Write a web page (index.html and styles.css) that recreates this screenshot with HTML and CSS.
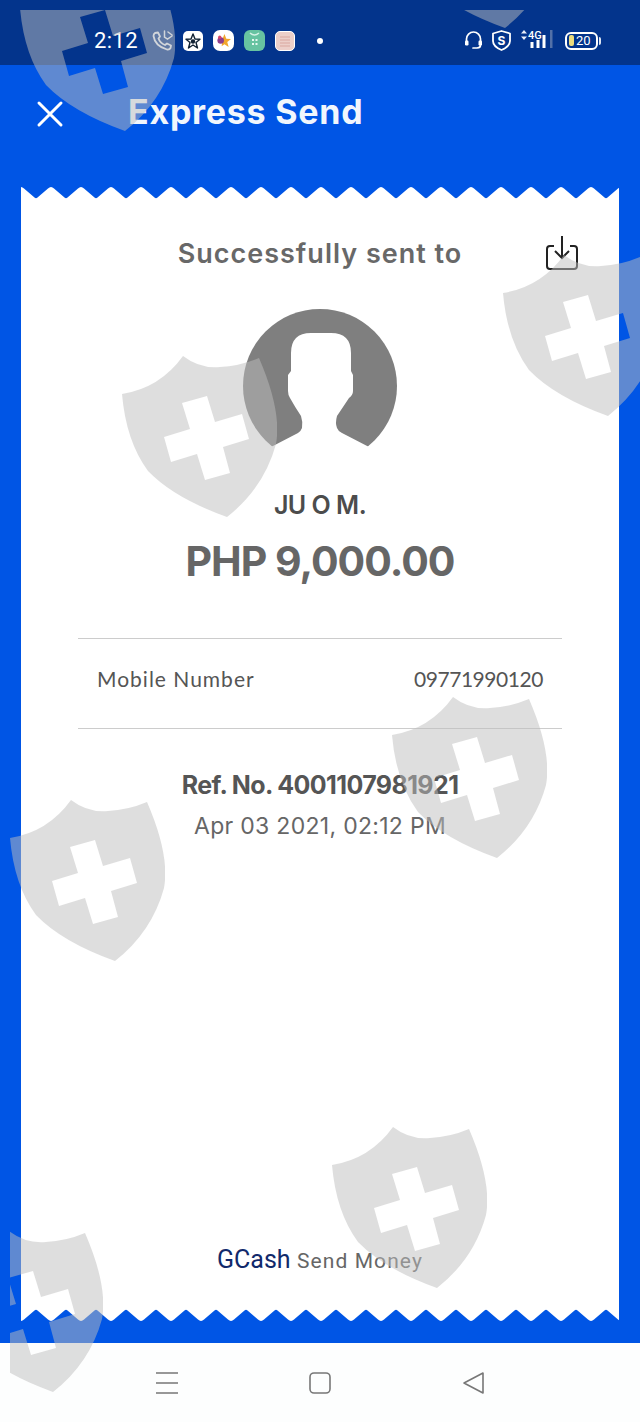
FILE: index.html
```html
<!DOCTYPE html>
<html lang="en">
<head>
    <meta charset="UTF-8">
    <meta name="viewport" content="width=device-width, initial-scale=1.0">
    <title>Express Send</title>
    <link rel="stylesheet" href="styles.css">
</head>
<body>
    <svg class="defs" width="0" height="0">
        <defs>
            <pattern id="teeth" width="30" height="13" patternUnits="userSpaceOnUse">
                <path d="M0 1 Q1.500 1 3 2.500 L13.500 11.500 Q15 12.800 16.500 11.500 L27 2.500 Q28.500 1 30 1 V13 H0 Z" fill="#fff"/>
            </pattern>
            <symbol id="shield" viewBox="0 0 155 162">
                <path fill-rule="evenodd" d="M61 0 Q78 13 98 11 Q118 10 137 2 Q160 55 154 88 Q142 132 105 161 Q52 142 26 115 Q4 85 0 38 Q38 32 61 0 Z M60 47 L85 40 L93 66 L120 58 L127 83 L101 91 L108 117 L83 124 L75 98 L49 106 L42 81 L68 73 Z"/>
            </symbol>
        </defs>
    </svg>

    <div class="status-bar">
        <span class="time">2:12</span>
        <svg class="phone" width="21" height="21" viewBox="0 0 21 21">
            <path d="M3 3 L6 2.500 L8 6.500 L6.500 8.500 Q8 13 13 15 L15 13.500 L19 15.500 L18.500 18 Q17.500 20 15 19.500 Q3 16 1.500 6 Q1.500 4 3 3 Z" fill="none" stroke="#e4ecf6" stroke-width="1.800" stroke-linejoin="round"/>
            <path d="M12.500 1 V7 L15.500 9 L20 6 M16 2 L20 5" fill="none" stroke="#e4ecf6" stroke-width="1.500" stroke-linecap="round"/>
        </svg>
        <span class="tile tile-star">
            <svg width="16" height="16" viewBox="0 0 16 16"><path d="M8 1 L10 6 L15 6.300 L11 9.500 L12.500 15 L8 12 L3.500 15 L5 9.500 L1 6.300 L6 6 Z" fill="#fff" stroke="#123" stroke-width="1.400" stroke-linejoin="round"/><circle cx="8" cy="8.500" r="2.200" fill="#123"/></svg>
        </span>
        <span class="tile tile-color">
            <svg width="15" height="15" viewBox="0 0 16 16"><path d="M9 1 L11 6 L16 6.300 L12 9.500 L13.500 15 L9 12 L6 14 L7 6 Z" fill="#f2a62c"/><circle cx="5" cy="8" r="3.500" fill="#8e3f8c"/><circle cx="4" cy="4.500" r="1.800" fill="#d8446a"/></svg>
        </span>
        <span class="tile tile-teal">
            <svg width="15" height="17" viewBox="0 0 15 17"><path d="M3 1 Q7.500 5 12 1" fill="none" stroke="#d5f2e6" stroke-width="1.400"/><path d="M5 7 H7 V9 H5 Z M8.500 7 H10.500 V9 H8.500 Z M5 11 H7 V13 H5 Z M8.500 11 H10.500 V13 H8.500 Z" fill="#e6f8f0"/></svg>
        </span>
        <span class="tile tile-note">
            <svg width="14" height="14" viewBox="0 0 14 14"><path d="M2 3 H12 M2 6 H12 M2 9 H12 M2 12 H12" stroke="#d9a79f" stroke-width="1"/></svg>
        </span>
        <span class="dot"></span>

        <span class="status-right">
            <svg width="19" height="19" viewBox="0 0 19 19">
                <path d="M2.500 11 V8 A7 7 0 0 1 16.500 8 V11 M16.500 14 Q16.500 17 13 17 H9" fill="none" stroke="#fff" stroke-width="1.700" stroke-linecap="round"/>
                <rect x="1" y="9.500" width="3.500" height="5" rx="1.200" fill="#fff"/>
                <rect x="14.500" y="9.500" width="3.500" height="5" rx="1.200" fill="#fff"/>
            </svg>
            <svg class="s-shield" width="19" height="21" viewBox="0 0 19 21">
                <path d="M9.500 1 L18 3.500 V11 Q18 16.500 9.500 20 Q1 16.500 1 11 V3.500 Z" fill="none" stroke="#fff" stroke-width="1.800" stroke-linejoin="round"/>
                <text x="9.500" y="14.500" class="s-letter">S</text>
            </svg>
            <span class="signal">
                <svg width="36" height="20" viewBox="0 0 36 20">
                    <path d="M4 1 L7 4.500 H1 Z M4 11 L1 7.500 H7 Z" fill="#e8eef8"/>
                    <text x="8" y="10" class="net">4G</text>
                    <rect x="10.500" y="13" width="3" height="6" fill="#fff"/>
                    <rect x="16.500" y="11" width="3" height="8" fill="#fff"/>
                    <rect x="22.500" y="6" width="3" height="13" fill="#fff"/>
                    <rect x="30" y="1" width="2.500" height="18" fill="#5270a8"/>
                </svg>
            </span>
            <span class="battery"><i class="charge"></i>20</span>
        </span>
    </div>

    <div class="main">
        <div class="header">
            <svg class="close" width="28" height="28" viewBox="0 0 28 28">
                <path d="M3 3 L25 25 M25 3 L3 25" stroke="#fff" stroke-width="3" stroke-linecap="round"/>
            </svg>
            <span class="title">Express Send</span>
        </div>

        <div class="receipt">
            <svg class="zigzag" width="598" height="13"><rect width="598" height="13" fill="url(#teeth)"/></svg>
            <div class="paper">
                <div class="heading">
                    <span></span>
                    <h1>Successfully sent to</h1>
                    <svg class="save" width="34" height="36" viewBox="0 0 34 36">
                        <path d="M9 11 H5 Q2 11 2 14 V31 Q2 34 5 34 H29 Q32 34 32 31 V14 Q32 11 29 11 H25" fill="none" stroke="#222" stroke-width="2"/>
                        <path d="M17 1 V23 M10 16 L17 23 L24 16" fill="none" stroke="#222" stroke-width="2"/>
                    </svg>
                </div>

                <svg class="avatar" width="154" height="154" viewBox="0 0 154 154">
                    <circle cx="77" cy="77" r="77" fill="#7f7f7f"/>
                    <path d="M48 62 V44 Q48 24 68 24 H88 Q108 24 108 44 V62 L110 66 V82 Q110 86 106 89 Q100 98 94 107 Q92 114 94 119 Q95 122 99 124 L128 139 L128 154 H28 V138 L55 124 Q58 122 59 119 Q60 113 58 107 Q52 98 47 89 Q45 86 45 82 V66 Z" fill="#fff"/>
                </svg>

                <div class="name">JU O M.</div>
                <div class="amount">PHP 9,000.00</div>

                <div class="detail">
                    <span>Mobile Number</span>
                    <span class="detail-value">09771990120</span>
                </div>

                <div class="ref">Ref. No. 4001107981921</div>
                <div class="date">Apr 03 2021, 02:12 PM</div>

                <div class="brand"><span class="brand-name">GCash</span> Send Money</div>
            </div>
            <svg class="zigzag flip" width="598" height="13"><rect width="598" height="13" fill="url(#teeth)"/></svg>
        </div>
    </div>

    <div class="nav-bar">
        <svg width="24" height="24" viewBox="0 0 24 24"><path d="M1 2 H23 M1 12 H23 M1 22 H23" stroke="#777" stroke-width="1.600"/></svg>
        <svg width="24" height="24" viewBox="0 0 24 24"><rect x="2" y="2" width="20" height="20" rx="4" fill="none" stroke="#777" stroke-width="1.600"/></svg>
        <svg width="24" height="24" viewBox="0 0 24 24"><path d="M22 2 V22 L3 12 Z" fill="none" stroke="#777" stroke-width="1.600" stroke-linejoin="round"/></svg>
    </div>

    <!-- watermark over the whole screen -->
    <div class="watermarks">
        <svg class="mark m1"><use href="#shield"/></svg>
        <svg class="mark m2"><use href="#shield"/></svg>
        <svg class="mark m3"><use href="#shield"/></svg>
        <svg class="mark m4"><use href="#shield"/></svg>
        <svg class="mark m5"><use href="#shield"/></svg>
        <svg class="mark m6"><use href="#shield"/></svg>
        <svg class="mark m7"><use href="#shield"/></svg>
        <svg class="mark m8"><use href="#shield"/></svg>
    </div>
</body>
</html>
```

FILE: styles.css
```css
body {
    margin: 0;
    width: 640px;
    height: 1422px;
    display: flex;
    flex-direction: column;
    overflow: hidden;
    position: relative;
    font-family: 'Inter', sans-serif;
    background: #fdfefe;
}
.defs {
    position: absolute;
}
.status-bar {
    height: 65px;
    flex: none;
    display: flex;
    align-items: center;
    padding: 16px 42px 0 94px;
    box-sizing: border-box;
    background: #03348c;
    color: #fff;
}
.time {
    font-family: 'Roboto', sans-serif;
    font-size: 22px;
    letter-spacing: 0.4px;
    margin-right: 14px;
}
.phone {
    margin-right: 10px;
}
.tile {
    width: 20px;
    height: 20px;
    border-radius: 5px;
    margin-right: 10px;
    display: flex;
    align-items: center;
    justify-content: center;
    background: #fff;
}
.tile-color {
    border-radius: 7px;
    width: 21px;
    height: 21px;
}
.tile-teal {
    background: #67c3a1;
    border-radius: 6px;
    width: 21px;
    height: 21px;
}
.tile-note {
    background: #eccfc9;
    border: 1px solid #fff;
    box-sizing: border-box;
    border-radius: 5px;
}
.dot {
    width: 6px;
    height: 6px;
    border-radius: 50%;
    background: #fff;
    margin-left: 12px;
}
.status-right {
    margin-left: auto;
    display: flex;
    align-items: center;
    gap: 9px;
}
.s-letter {
    font-family: 'Inter', sans-serif;
    font-size: 12px;
    font-weight: 700;
    fill: #fff;
    text-anchor: middle;
}
.net {
    font-family: 'Roboto', sans-serif;
    font-size: 11px;
    font-weight: 500;
    fill: #fff;
}
.battery {
    width: 33px;
    height: 18px;
    border: 2px solid #fff;
    border-radius: 6px;
    box-sizing: border-box;
    display: flex;
    align-items: center;
    font-family: 'Roboto', sans-serif;
    font-size: 13px;
    color: #fff;
    padding-left: 2px;
    gap: 2px;
    position: relative;
}
.battery::after {
    content: "";
    position: absolute;
    right: -5px;
    top: 3px;
    width: 2px;
    height: 8px;
    background: #dfe6f2;
    border-radius: 0 2px 2px 0;
}
.charge {
    width: 5px;
    height: 11px;
    background: #ecdc7c;
    border-radius: 2px;
}
.main {
    flex: 1;
    display: flex;
    flex-direction: column;
    background: #0055e5;
    padding: 0 21px 21px;
}
.header {
    height: 121px;
    flex: none;
    display: flex;
    align-items: flex-start;
    padding-top: 33px;
    box-sizing: border-box;
}
.close {
    margin: 2px 0 0 15px;
}
.title {
    margin-left: 64px;
    font-size: 34px;
    font-weight: 700;
    line-height: 27px;
    letter-spacing: 0.75px;
    color: #f1f6fd;
}
.receipt {
    flex: 1;
    display: flex;
    flex-direction: column;
}
.zigzag {
    display: block;
    flex: none;
}
.flip {
    transform: scaleY(-1);
}
.paper {
    flex: 1;
    display: flex;
    flex-direction: column;
    align-items: center;
    background: #fff;
    color: #666;
}
.heading {
    width: 100%;
    display: grid;
    grid-template-columns: 1fr auto 1fr;
    align-items: center;
    padding-top: 34px;
    height: 40px;
}
.heading h1 {
    margin: 0;
    font-size: 27px;
    font-weight: 600;
    letter-spacing: 1px;
    color: #686868;
}
.save {
    justify-self: end;
    margin: 0 40px 0 0;
}
.avatar {
    margin-top: 36px;
}
.name {
    margin-top: 27px;
    font-size: 25px;
    font-weight: 600;
    letter-spacing: -0.5px;
    color: #4c4c4c;
}
.amount {
    margin-top: 16px;
    font-size: 41px;
    font-weight: 700;
    letter-spacing: -1px;
    color: #666;
}
.detail {
    width: 484px;
    height: 91px;
    margin-top: 52px;
    padding: 0 19px 10px;
    box-sizing: border-box;
    display: flex;
    justify-content: space-between;
    align-items: center;
    border-top: 1px solid #ccc;
    border-bottom: 1px solid #ccc;
    font-family: 'Lato', sans-serif;
    font-size: 21px;
    letter-spacing: 1px;
    color: #555;
}
.detail-value {
    letter-spacing: -0.45px;
}
.ref {
    margin-top: 41px;
    font-size: 25px;
    font-weight: 700;
    letter-spacing: -0.6px;
    color: #555;
}
.date {
    margin-top: 12px;
    font-size: 23px;
    letter-spacing: 0.3px;
    color: #666;
}
.brand {
    margin-top: auto;
    margin-bottom: 35px;
    font-family: 'Roboto', sans-serif;
    font-size: 21px;
    letter-spacing: 1.1px;
    color: #666;
}
.brand-name {
    font-size: 25px;
    letter-spacing: 0;
    color: #11296b;
}
.nav-bar {
    height: 79px;
    flex: none;
    display: flex;
    align-items: center;
    padding: 0 155px;
    box-sizing: border-box;
    justify-content: space-between;
}
.watermarks {
    position: absolute;
    top: 10px;
    left: 10px;
    right: 0;
    bottom: 0;
    overflow: hidden;
    pointer-events: none;
}
.mark {
    position: absolute;
    width: 155px;
    height: 162px;
    fill: rgba(190, 190, 190, 0.5);
}
/* places are relative to the watermark layer, which starts at 10,10 */
.m1 { left: 10px; top: -40px; }
.m2 { left: 390px; top: -143px; }
.m3 { left: 493px; top: 245px; }
.m4 { left: 112px; top: 346px; }
.m5 { left: 382px; top: 687px; }
.m6 { left: 0; top: 790px; }
.m7 { left: 322px; top: 1117px; }
.m8 { left: -62px; top: 1221px; }
```
